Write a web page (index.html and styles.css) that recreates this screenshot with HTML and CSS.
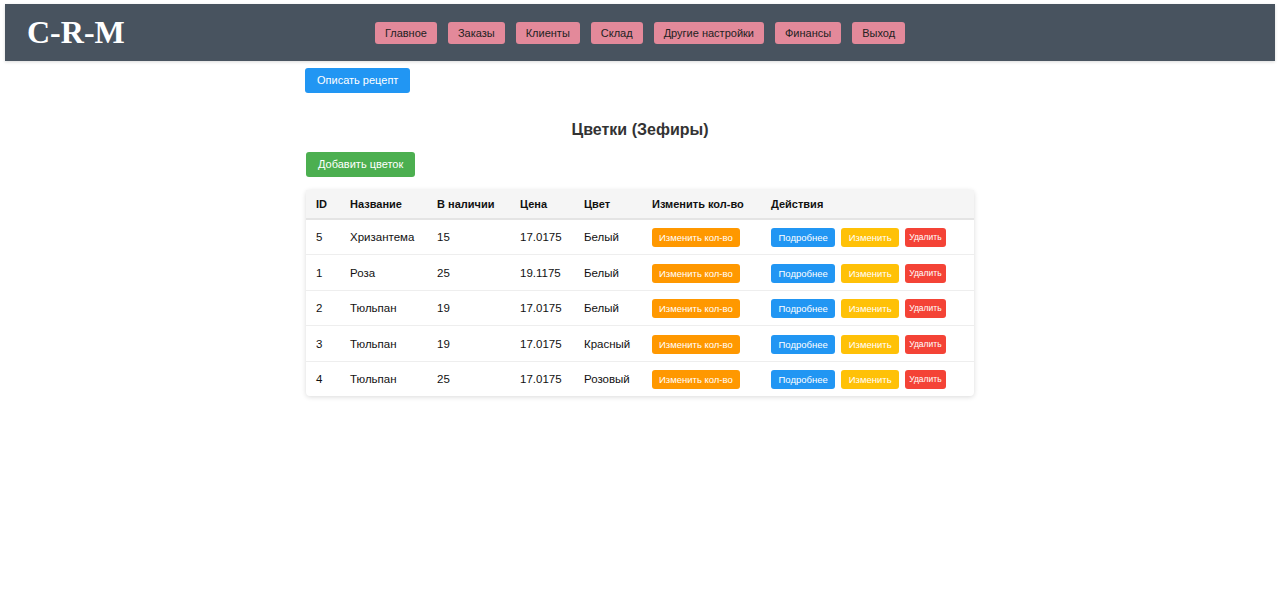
FILE: index.html
```html
<!DOCTYPE html>
<html lang="ru">
<head>
<meta charset="utf-8">
<title>C-R-M</title>
<link rel="stylesheet" href="styles.css">
</head>
<body>
<header class="topbar">
  <div class="logo">C-R-M</div>
  <nav class="nav">
    <a class="nav-btn">Главное</a>
    <a class="nav-btn">Заказы</a>
    <a class="nav-btn">Клиенты</a>
    <a class="nav-btn">Склад</a>
    <a class="nav-btn">Другие настройки</a>
    <a class="nav-btn">Финансы</a>
    <a class="nav-btn">Выход</a>
  </nav>
  <div></div>
</header>
<main class="content">
  <button class="btn btn-blue btn-lg recipe">Описать рецепт</button>
  <h2 class="title">Цветки (Зефиры)</h2>
  <button class="btn btn-green btn-lg">Добавить цветок</button>
  <table class="grid">
    <thead>
      <tr>
        <th class="c-id">ID</th>
        <th class="c-name">Название</th>
        <th class="c-stock">В наличии</th>
        <th class="c-price">Цена</th>
        <th class="c-color">Цвет</th>
        <th class="c-qty">Изменить кол-во</th>
        <th class="c-act">Действия</th>
      </tr>
    </thead>
    <tbody>
      <tr>
        <td>5</td><td>Хризантема</td><td>15</td><td>17.0175</td><td>Белый</td>
        <td><button class="btn btn-orange">Изменить кол-во</button></td>
        <td class="acts"><button class="btn btn-blue">Подробнее</button><button class="btn btn-yellow">Изменить</button><button class="btn btn-red">Удалить</button></td>
      </tr>
      <tr>
        <td>1</td><td>Роза</td><td>25</td><td>19.1175</td><td>Белый</td>
        <td><button class="btn btn-orange">Изменить кол-во</button></td>
        <td class="acts"><button class="btn btn-blue">Подробнее</button><button class="btn btn-yellow">Изменить</button><button class="btn btn-red">Удалить</button></td>
      </tr>
      <tr>
        <td>2</td><td>Тюльпан</td><td>19</td><td>17.0175</td><td>Белый</td>
        <td><button class="btn btn-orange">Изменить кол-во</button></td>
        <td class="acts"><button class="btn btn-blue">Подробнее</button><button class="btn btn-yellow">Изменить</button><button class="btn btn-red">Удалить</button></td>
      </tr>
      <tr>
        <td>3</td><td>Тюльпан</td><td>19</td><td>17.0175</td><td>Красный</td>
        <td><button class="btn btn-orange">Изменить кол-во</button></td>
        <td class="acts"><button class="btn btn-blue">Подробнее</button><button class="btn btn-yellow">Изменить</button><button class="btn btn-red">Удалить</button></td>
      </tr>
      <tr>
        <td>4</td><td>Тюльпан</td><td>25</td><td>17.0175</td><td>Розовый</td>
        <td><button class="btn btn-orange">Изменить кол-во</button></td>
        <td class="acts"><button class="btn btn-blue">Подробнее</button><button class="btn btn-yellow">Изменить</button><button class="btn btn-red">Удалить</button></td>
      </tr>
    </tbody>
  </table>
</main>
</body>
</html>
```
FILE: styles.css
```css
* { box-sizing: border-box; }
html, body { margin: 0; padding: 0; background: #fff; }
body {
  font-family: "Liberation Sans", Arial, sans-serif;
  font-size: 12px;
  color: #222;
}
.topbar {
  margin: 4px 5px 0;
  height: 57px;
  background: #48535f;
  display: grid;
  grid-template-columns: 1fr auto 1fr;
  align-items: center;
  box-shadow: 0 1px 3px rgba(0,0,0,0.15);
}
.logo {
  padding-left: 22px;
  font-family: "Liberation Serif", "Times New Roman", serif;
  font-weight: bold;
  font-size: 32px;
  line-height: 1;
  color: #fff;
  margin-top: -2px;
}
.nav {
  display: flex;
  gap: 11px;
}
.nav-btn {
  display: block;
  background: #e3899a;
  color: #222;
  font-size: 11px;
  line-height: 14px;
  padding: 4px 10px;
  border-radius: 3px;
}
.content {
  width: 668px;
  margin: 0 auto;
  padding-top: 7px;
  display: flex;
  flex-direction: column;
  align-items: flex-start;
}
.btn {
  font-family: "Liberation Sans", Arial, sans-serif;
  border: 0;
  color: #fff;
  border-radius: 3px;
  font-size: 9.5px;
  line-height: 13px;
  padding: 3px 7.5px;
  cursor: pointer;
}
.btn-lg {
  font-size: 11px;
  line-height: 13px;
  padding: 6px 12px;
}
.recipe { margin-left: -1px; }
.btn-blue { background: #2196f3; }
.btn-green { background: #4caf50; }
.btn-orange { background: #ff9800; padding: 3px 7px; }
.btn-yellow { background: #ffc107; }
.btn-red { background: #f44336; font-size: 8.5px; padding: 3px 4px; }
.title {
  align-self: stretch;
  text-align: center;
  font-size: 16px;
  line-height: 20px;
  color: #333;
  margin: 27px 0 12px;
}
.grid {
  margin-top: 13px;
  margin-bottom: 8px;
  width: 668px;
  border-collapse: collapse;
  table-layout: fixed;
  box-shadow: 0 1px 5px rgba(0,0,0,0.15);
  border-radius: 4px;
  background: #fff;
}
.grid th {
  background: #f5f5f5;
  text-align: left;
  font-weight: bold;
  font-size: 11px;
  color: #111;
  padding: 7px 10px 7px;
  line-height: 14px;
  border-bottom: 2px solid #e4e4e4;
  white-space: nowrap;
}
.grid td {
  padding: 8px 10px 7px;
  line-height: 19px;
  font-size: 11.5px;
  color: #111;
  border-bottom: 1px solid #eee;
  white-space: nowrap;
}
.grid tbody tr:last-child td { border-bottom: 0; }
.grid td .btn { vertical-align: middle; }
.acts .btn + .btn { margin-left: 6px; }
.c-id { width: 34px; }
.c-name { width: 87px; }
.c-stock { width: 83px; }
.c-price { width: 64px; }
.c-color { width: 68px; }
.c-qty { width: 119px; }
.c-act { width: 213px; }
```
